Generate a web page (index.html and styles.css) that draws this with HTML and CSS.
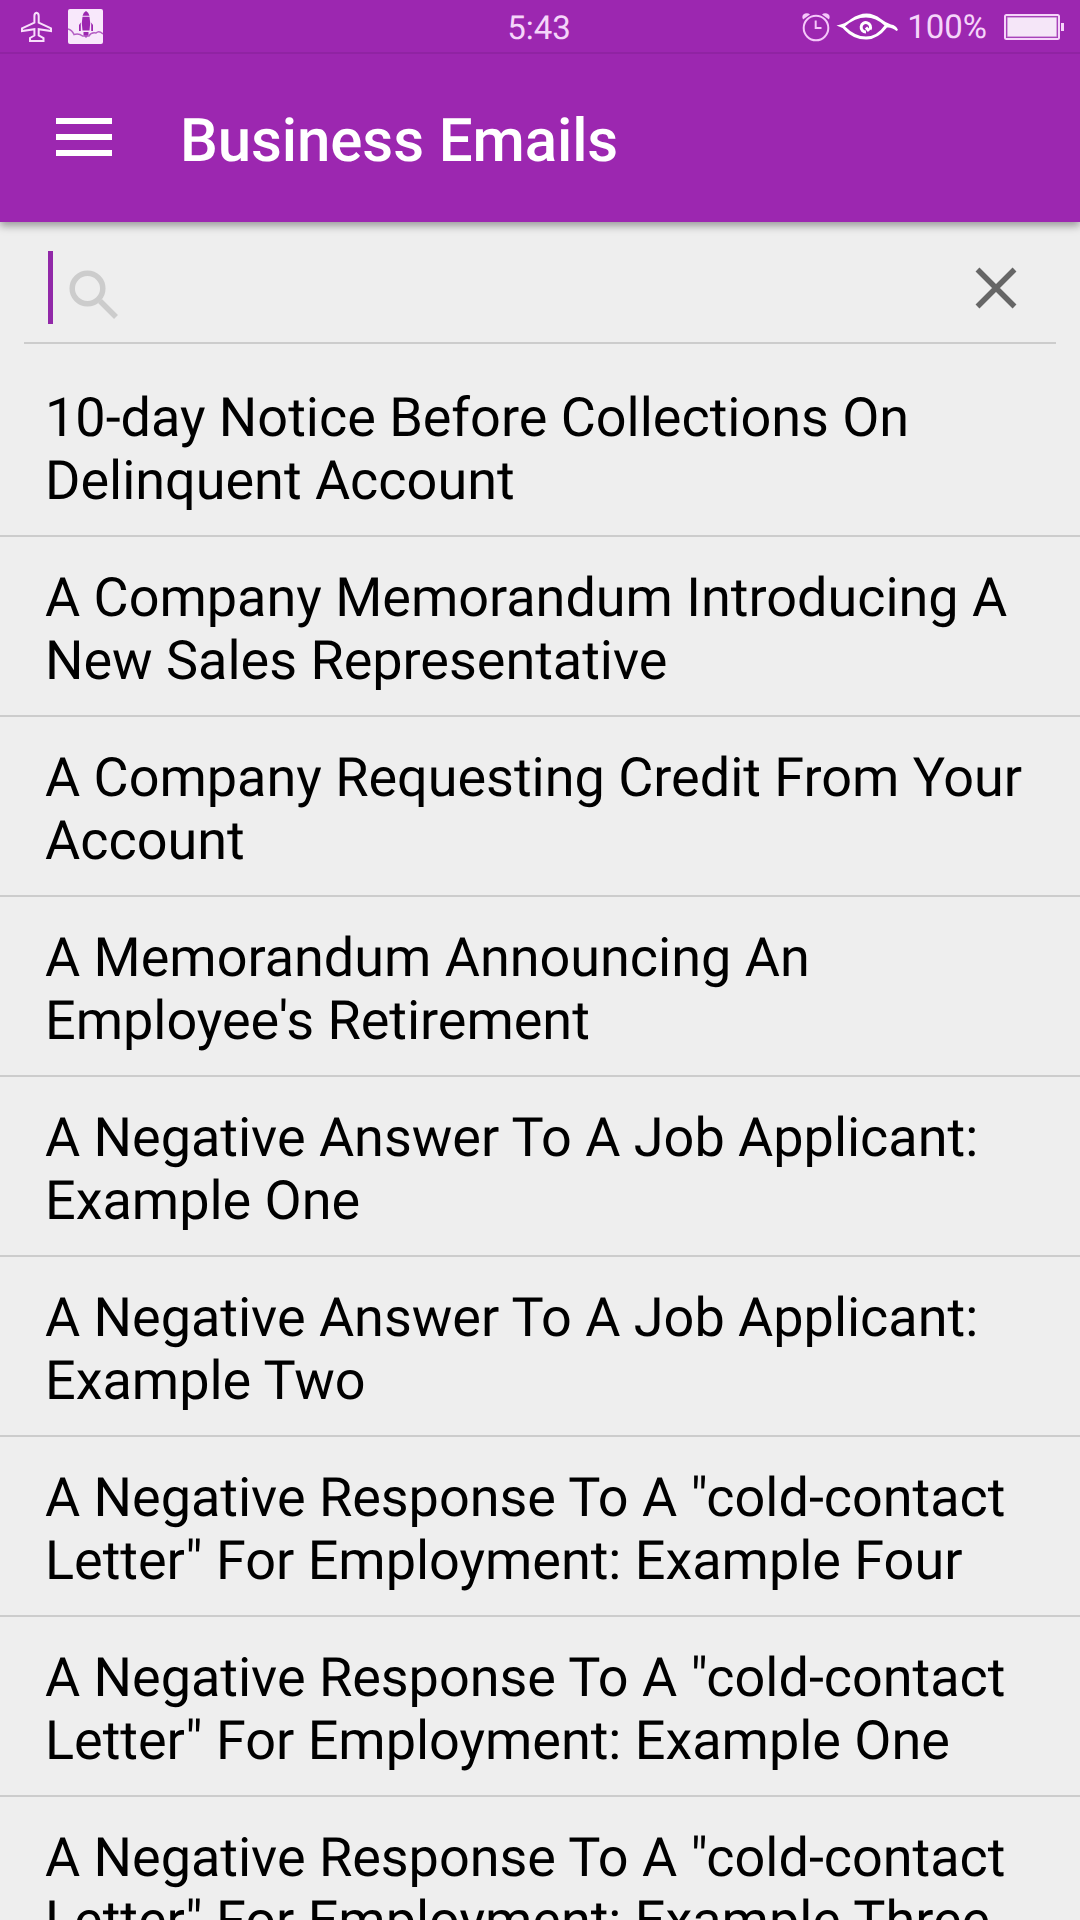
FILE: index.html
```html
<!DOCTYPE html>
<html lang="en">

<head>
    <meta charset="UTF-8" />
    <meta name="viewport" content="width=device-width, initial-scale=1" />
    <title>Business Emails</title>
    <link rel="stylesheet" href="styles.css">
</head>

<body>
    <header class="header">
        <div class="status-bar">
            <div class="status-left">
                <svg class="plane" viewBox="0 0 33 32">
                    <path d="M16.5 1.700 Q18.700 2 18.700 5 V11.700 L31 17.300 V20 L18.700 18.200 V24.500 L23.500 27 V30 H10 V27 L14.400 24.500 V18.200 L2 20 V17.300 L14.400 11.700 V5 Q14.400 2 16.500 1.700 Z" />
                </svg>
                <svg class="rocket" viewBox="0 0 35 35">
                    <rect width="35" height="35" rx="2" fill="#f8e8fb" />
                    <path d="M14.500 6.800 Q15.500 3 18 2 Q20.500 3 21.500 6.800 Z" fill="#9c27b0" />
                    <path d="M14.500 7.800 H21.500 Q23 14 21.500 21.500 H14.500 Q13 14 14.500 7.800 Z M12.800 13.500 V22 H11 V16 Z M23.200 13.500 V22 H25 V16 Z M15.500 23 H20.500 V26 L18 29 L15.500 26 Z" fill="#9c27b0" />
                    <path d="M0 20 Q4 21 6 25.500 Q11 24 14.500 27 H21 Q23 23 28 24 Q31 21 35 25" fill="none" stroke="#b45fc4" stroke-width="1.500" />
                </svg>
            </div>
            <div class="clock">5:43</div>
            <div class="status-right">
                <svg class="alarm" viewBox="0 0 30 30">
                    <circle cx="15" cy="16" r="12.300" />
                    <path d="M14.700 8.500 V16 H20.500" />
                    <path class="bell" d="M2 7.500 Q0 3 4 1.500 Q7 .5 9 2.500 Z M28 7.500 Q30 3 26 1.500 Q23 .5 21 2.500 Z" />
                </svg>
                <svg class="eye" viewBox="0 0 63 30">
                    <path d="M.5 13.500 Q9 12 15 7 Q31 -4 45 7 Q50 11 55 12.500 Q60 13 62 18 L60.500 19 Q56 15 51 15.500 Q42 27 31 27.500 Q18 28 9 18.500 Q6 15 .5 13.500 Z M9 14.500 Q19 24.500 30 24.500 Q41 24.500 48.500 13.500 Q40 5.500 30 5.500 Q19 5.500 9 14.500 Z" fill="#fff" fill-rule="evenodd" />
                    <path d="M34 17.500 A4.700 4.700 0 1 0 30 20 M30 15.500 L33 19" fill="none" stroke="#fff" stroke-width="3" />
                </svg>
                <span class="percent">100%</span>
                <svg class="battery" viewBox="0 0 60 26">
                    <rect x="1" y="1" width="54" height="24" rx="1.500" fill="none" stroke="#f5d5fa" stroke-width="2" />
                    <rect x="3" y="3" width="50" height="20" fill="#f5e6f8" stroke="#b45fc4" stroke-width="1" />
                    <path d="M57 9 h3 v8 h-3 z" fill="#f5d5fa" />
                </svg>
            </div>
        </div>
        <div class="toolbar">
            <button class="menu-btn"><span></span><span></span><span></span></button>
            <h1 class="title">Business Emails</h1>
        </div>
    </header>

    <div class="search">
        <span class="cursor"></span>
        <svg class="search-icon" viewBox="0 0 50 50">
            <circle cx="18.500" cy="18.500" r="15.300" />
            <path d="M31 31 L47 47" />
        </svg>
        <svg class="close-icon" viewBox="0 0 42 42">
            <path d="M2.500 2.500 L39.500 39.500 M39.500 2.500 L2.500 39.500" />
        </svg>
    </div>

    <ul class="list">
        <li>10-day Notice Before Collections On Delinquent Account</li>
        <li>A Company Memorandum Introducing A New Sales Representative</li>
        <li>A Company Requesting Credit From Your Account</li>
        <li>A Memorandum Announcing An Employee's Retirement</li>
        <li>A Negative Answer To A Job Applicant: Example One</li>
        <li>A Negative Answer To A Job Applicant: Example Two</li>
        <li>A Negative Response To A "cold-contact Letter" For Employment: Example Four</li>
        <li>A Negative Response To A "cold-contact Letter" For Employment: Example One</li>
        <li>A Negative Response To A "cold-contact Letter" For Employment: Example Three</li>
    </ul>
</body>

</html>
```
FILE: styles.css
```css
body {
    margin: 0;
    height: 1920px;
    overflow: hidden;
    background: #eee;
    color: #000;
    font-family: Roboto, sans-serif;
    text-rendering: geometricPrecision;
}

.header {
    background: #9c27b0;
    height: 222px;
    box-shadow: 0 4px 8px rgba(0, 0, 0, 0.35);
}

.status-bar {
    height: 54px;
    box-sizing: border-box;
    border-bottom: 2px solid #9023a3;
    display: grid;
    grid-template-columns: 1fr auto 1fr;
    align-items: center;
    color: #f5d5fa;
    font-size: 33px;
}

.status-left,
.status-right {
    display: flex;
    align-items: center;
}

.status-left {
    padding-left: 20px;
    gap: 15px;
}

.status-right {
    justify-content: flex-end;
    padding-right: 16px;
}

.plane {
    width: 33px;
    height: 32px;
    margin-top: 2px;
    fill: none;
    stroke: #f8dffb;
    stroke-width: 2;
}

.rocket {
    width: 35px;
    height: 35px;
    margin-top: 1px;
}

.clock {
    margin: 4px 2px 0 0;
}

.alarm {
    width: 30px;
    height: 30px;
    margin-top: 2px;
    fill: none;
    stroke: #f5c8fa;
    stroke-width: 2;
}

.alarm .bell {
    fill: #f5c8fa;
    stroke: none;
}

.eye {
    width: 63px;
    height: 30px;
    margin: 2px 8px 0 5px;
}

.percent {
    margin-top: 2px;
}

.battery {
    width: 60px;
    height: 26px;
    margin: 2px 0 0 17px;
}

.toolbar {
    height: 168px;
    display: flex;
    align-items: center;
    padding-left: 56px;
}

.menu-btn {
    display: flex;
    flex-direction: column;
    gap: 10px;
    width: 56px;
    margin-bottom: 2px;
    padding: 0;
    border: none;
    background: none;
}

.menu-btn span {
    height: 6px;
    background: #fff;
}

.title {
    margin: 4px 0 0 68px;
    color: #fff;
    font-size: 60px;
    font-weight: 500;
    letter-spacing: -0.1px;
}

.search {
    display: flex;
    align-items: center;
    height: 122px;
    margin: 0 24px;
    padding: 11px 39px 0 24px;
    box-sizing: border-box;
    border-bottom: 2px solid #ccc;
}

.cursor {
    width: 5px;
    height: 73px;
    background: #9128a8;
}

.search-icon {
    width: 50px;
    height: 50px;
    margin: 15px 0 0 16px;
    fill: none;
    stroke: #ccc;
    stroke-width: 5.5;
}

.close-icon {
    width: 42px;
    height: 42px;
    margin-left: auto;
    fill: none;
    stroke: #666;
    stroke-width: 5.5;
}

.list {
    margin: 0;
    padding: 13px 0 0;
    list-style: none;
}

.list li {
    height: 180px;
    box-sizing: border-box;
    padding: 30px 45px 0;
    border-bottom: 2px solid #ccc;
    font-size: 54px;
    line-height: 63px;
    letter-spacing: -0.02px;
}
```
